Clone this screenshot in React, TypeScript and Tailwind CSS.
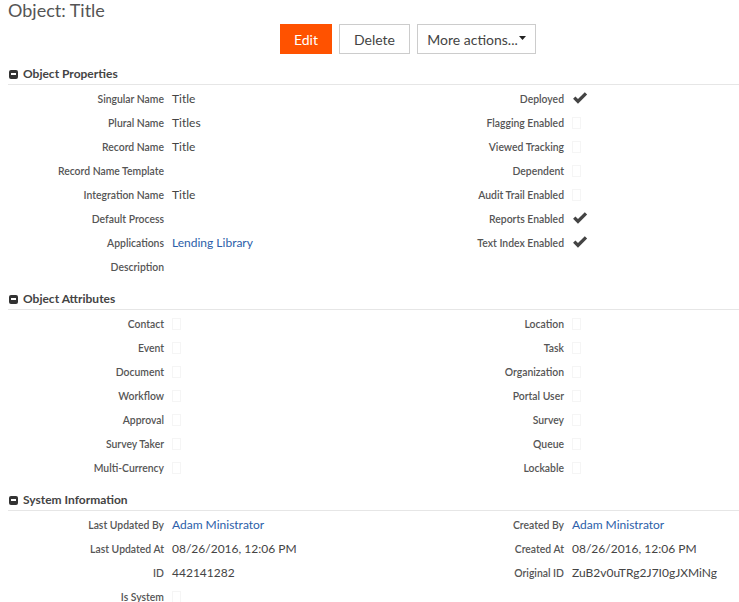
import React from "react";

type Field = { label: string; value?: string; link?: boolean; check?: boolean; box?: boolean };

const propsLeft: Field[] = [
  { label: "Singular Name", value: "Title" },
  { label: "Plural Name", value: "Titles" },
  { label: "Record Name", value: "Title" },
  { label: "Record Name Template" },
  { label: "Integration Name", value: "Title" },
  { label: "Default Process" },
  { label: "Applications", value: "Lending Library", link: true },
  { label: "Description" },
];

const propsRight: Field[] = [
  { label: "Deployed", check: true },
  { label: "Flagging Enabled", box: true },
  { label: "Viewed Tracking", box: true },
  { label: "Dependent", box: true },
  { label: "Audit Trail Enabled", box: true },
  { label: "Reports Enabled", check: true },
  { label: "Text Index Enabled", check: true },
];

const attrLeft: Field[] = ["Contact", "Event", "Document", "Workflow", "Approval", "Survey Taker", "Multi-Currency"].map(
  (label) => ({ label, box: true })
);
const attrRight: Field[] = ["Location", "Task", "Organization", "Portal User", "Survey", "Queue", "Lockable"].map(
  (label) => ({ label, box: true })
);

const sysLeft: Field[] = [
  { label: "Last Updated By", value: "Adam Ministrator", link: true },
  { label: "Last Updated At", value: "08/26/2016, 12:06 PM" },
  { label: "ID", value: "442141282" },
  { label: "Is System", box: true },
];
const sysRight: Field[] = [
  { label: "Created By", value: "Adam Ministrator", link: true },
  { label: "Created At", value: "08/26/2016, 12:06 PM" },
  { label: "Original ID", value: "ZuB2v0uTRg2J7I0gJXMiNg" },
];

function Check() {
  return (
    <svg width="16" height="14" viewBox="0 0 15 13" className="mt-[-3px]">
      <path d="M1 7.2 L3.2 5 L5.6 7.4 L12 1 L14.2 3.2 L5.6 11.8 Z" fill="#444" />
    </svg>
  );
}

function Row({ f, labelW }: { f: Field; labelW: string }) {
  return (
    <div className="flex h-6 items-center">
      <div className={`${labelW} shrink-0 pt-[1px] text-right text-[10.4px] font-semibold text-[#555]`}>{f.label}</div>
      <div className="ml-2 flex items-center text-[12px]">
        {f.check && <Check />}
        {f.box && <div className="h-[12px] w-[9px] border border-[#f5f5f5]" />}
        {f.value && <span className={f.link ? "text-[#2b5ea9]" : "text-[#444]"}>{f.value}</span>}
      </div>
    </div>
  );
}

function Section({ title, left, right, mb }: { title: string; left: Field[]; right: Field[]; mb?: string }) {
  return (
    <section className={mb}>
      <div className="flex h-5 items-center gap-[5px] border-b border-[#e6e6e6] pl-px box-content">
        <span className="flex h-[9px] w-[9px] items-center justify-center rounded-[2px] bg-[#333]">
          <span className="h-[2px] w-[5px] bg-white" />
        </span>
        <span className="text-[12px] font-bold text-[#444]">{title}</span>
      </div>
      <div className="flex pt-[2px]">
        <div className="w-[365px] shrink-0">
          {left.map((f) => (
            <Row key={f.label} f={f} labelW="w-[156px]" />
          ))}
        </div>
        <div className="flex-1">
          {right.map((f) => (
            <Row key={f.label} f={f} labelW="w-[191px]" />
          ))}
        </div>
      </div>
    </section>
  );
}

export default function App() {
  return (
    <div className="min-h-[602px] w-[739px] bg-white pl-2 font-['Lato',sans-serif] text-[#444]">
      <h1 className="h-[22px] text-[18px] leading-[20px] text-[#555]">Object: Title</h1>
      <div className="mt-[2px] flex gap-[7px] pl-[272px]">
        <button className="h-[30px] w-[52px] bg-[#ff5200] text-[14px] text-white">Edit</button>
        <button className="h-[30px] w-[71px] border border-[#ccc] bg-white text-[14px] text-[#444]">Delete</button>
        <button className="flex h-[30px] w-[119px] items-center justify-center border border-[#ccc] bg-white text-[14px] text-[#444]">
          More actions...
          <svg width="7" height="4" viewBox="0 0 7 4" className="ml-[1px] mt-[-2px]">
            <path d="M0 0 H7 L3.5 4 Z" fill="#222" />
          </svg>
        </button>
      </div>
      <div className="mt-[10px]">
        <Section title="Object Properties" left={propsLeft} right={propsRight} mb="mb-[10px]" />
        <Section title="Object Attributes" left={attrLeft} right={attrRight} mb="mb-[10px]" />
        <Section title="System Information" left={sysLeft} right={sysRight} />
      </div>
    </div>
  );
}
